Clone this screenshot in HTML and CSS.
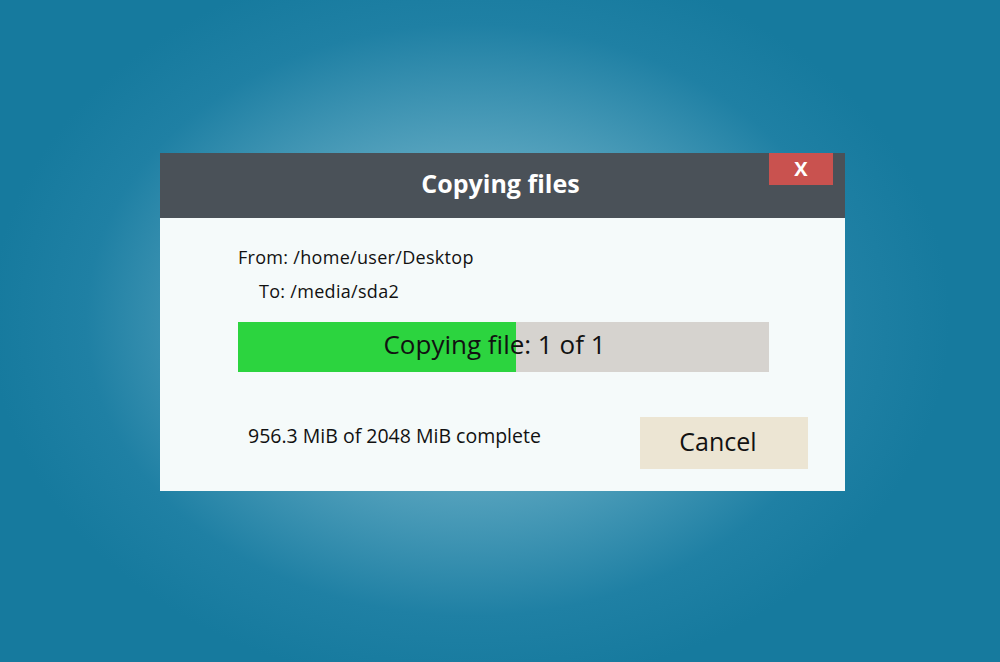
FILE: index.html
```html
<!DOCTYPE html>
<html lang="en">
<head>
  <meta charset="UTF-8">
  <title>Copying files</title>
  <link rel="stylesheet" href="styles.css">
</head>
<body>
  <div class="dialog">
    <div class="titlebar">
      <span class="title">Copying files</span>
      <button class="close">X</button>
    </div>
    <div class="content">
      <div class="path">From: /home/user/Desktop</div>
      <div class="path to">To: /media/sda2</div>
      <div class="progress">
        <div class="fill" style="width: 52.4%"></div>
        <span class="label">Copying file: 1 of 1</span>
      </div>
      <div class="bottom">
        <span class="status">956.3 MiB of 2048 MiB complete</span>
        <button class="cancel">Cancel</button>
      </div>
    </div>
  </div>
</body>
</html>
```

FILE: styles.css
```css
html, body {
  margin: 0;
  height: 100%;
}
body {
  font-family: "Open Sans", "Noto Sans", sans-serif;
  background: radial-gradient(ellipse 480px 370px at 470px 320px, #94c8d8 0%, #55a2bd 45%, #1f80a4 80%, #167a9e 100%);
  background-color: #167a9e;
  padding: 153px 0 0 160px;
  box-sizing: border-box;
  overflow: hidden;
}
.dialog {
  width: 685px;
  background: #f5fafa;
}
.titlebar {
  position: relative;
  height: 65px;
  background: #4a5158;
  display: flex;
  align-items: center;
  justify-content: center;
}
.title {
  color: white;
  font-size: 25px;
  font-weight: bold;
  margin-bottom: 6px;
  margin-left: -4px;
}
.close {
  position: absolute;
  top: 0;
  right: 12px;
  width: 64px;
  height: 32px;
  border: none;
  background: #c9524f;
  color: white;
  font-family: inherit;
  font-size: 20px;
  font-weight: bold;
  padding: 0 0 2px;
}
.content {
  padding: 24px 76px 22px 78px;
  height: 273px;
  box-sizing: border-box;
  color: #111;
}
.path {
  font-size: 18px;
  letter-spacing: 0.3px;
  line-height: 30px;
}
.to {
  padding-left: 21px;
  margin-top: 4px;
}
.progress {
  position: relative;
  margin-top: 16px;
  height: 50px;
  background: #d6d3cf;
  display: flex;
  align-items: center;
  justify-content: center;
}
.fill {
  position: absolute;
  left: 0;
  top: 0;
  bottom: 0;
  background: #2cd43f;
}
.label {
  position: relative;
  font-size: 26px;
  margin-right: 18px;
  margin-bottom: 7px;
}
.bottom {
  display: flex;
  justify-content: space-between;
  align-items: center;
  margin-top: 45px;
  margin-right: -39px;
}
.status {
  font-size: 19.5px;
  margin-left: 10px;
  margin-top: -16px;
}
.cancel {
  width: 168px;
  height: 52px;
  border: none;
  background: #ece5d3;
  font-family: inherit;
  font-size: 25px;
  color: #111;
  padding: 0 12px 5px 0;
}
```
